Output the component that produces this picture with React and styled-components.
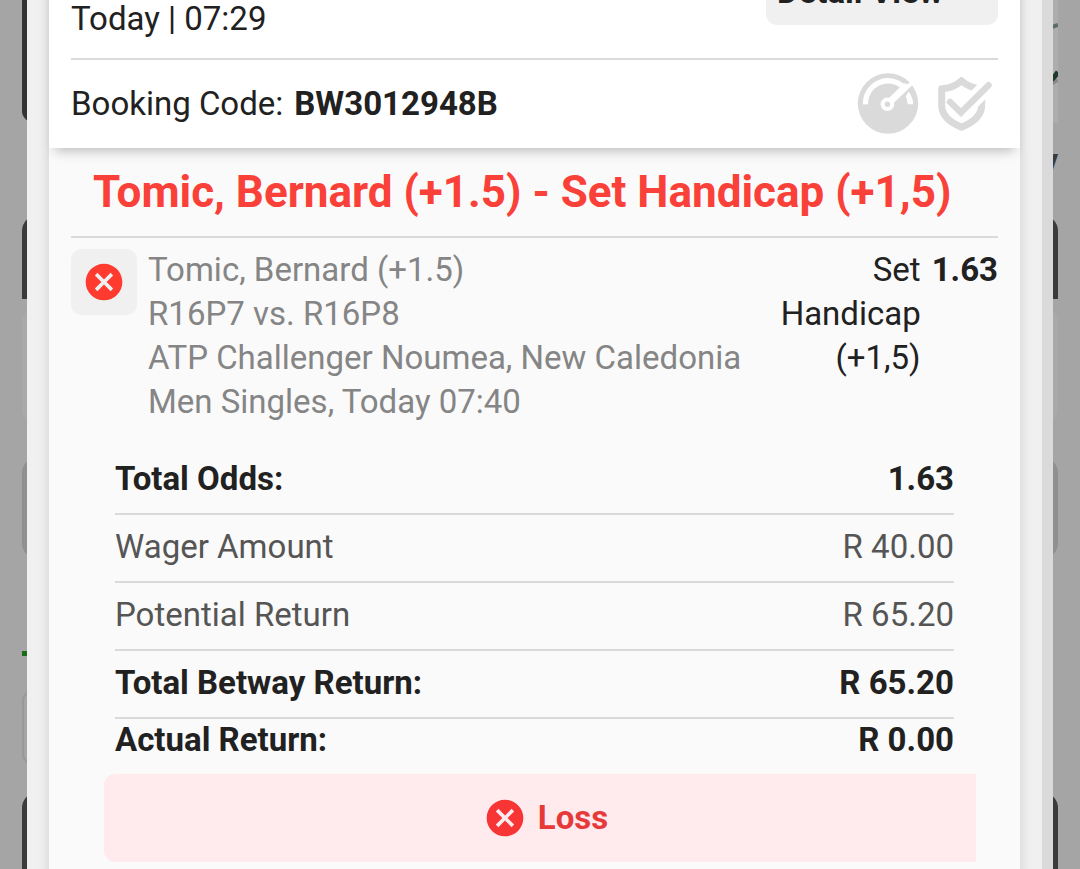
import React from 'react'
import styled, { createGlobalStyle } from 'styled-components'
import { MdCancel } from 'react-icons/md'

const GlobalStyle = createGlobalStyle`
  * {
    box-sizing: border-box;
  }

  body {
    margin: 0;
    background: #a5a5a5;
    color: #212121;
    font-family: Roboto, 'Liberation Sans', sans-serif;
    font-size: 33px;
    line-height: 44px;
  }
`

const Screen = styled.div`
  position: relative;
  min-height: 100vh;
  overflow: hidden;
`

// dimmed page that stays visible at both sides of the dialog
const Backdrop = styled.div`
  display: flex;
  flex-direction: column;
  height: 100vh;
  padding: 0 22px;
  overflow: hidden;
`

const TileRow = styled.div`
  display: flex;
  flex: none;
  height: 123px;
`

const Tile = styled.div`
  display: flex;
  flex: 1;
  justify-content: flex-end;
  height: ${props => props.$height}px;
  background: ${props => props.$color};
  border-radius: ${props => props.$radius};
`

const Caption = styled.div`
  flex: none;
  height: 92px;
  padding-top: 16px;
  color: #3b3b3b;
  font-weight: 700;
  text-align: right;
`

const Block = styled.div`
  flex: none;
  height: ${props => props.$height}px;
  margin-bottom: ${props => props.$gap}px;
  background: ${props => props.$color};
  border-radius: ${props => props.$radius || '0'};
`

const Marker = styled(Block)`
  width: 50%;
`

const Outline = styled(Block)`
  width: 50%;
  border: 2px solid #999999;
`

const Dialog = styled.main`
  position: absolute;
  top: 0;
  bottom: 0;
  left: 27px;
  right: 27px;
  padding: 0 22px;
  overflow: hidden;
  background: #f0f0f0;
  border-right: 11px solid #dadada;
`

const Slip = styled.article`
  min-height: 100%;
  padding-bottom: 22px;
  background: #fafafa;
  box-shadow: 0 0 11px rgba(0, 0, 0, 0.14);
`

const Header = styled.header`
  margin-top: -41px;
  padding: 0 22px;
  background: #ffffff;
  box-shadow: 0 9px 11px -6px rgba(0, 0, 0, 0.25);
`

const HeaderTop = styled.div`
  display: flex;
  justify-content: space-between;
  align-items: flex-start;
  padding-bottom: 17px;
  border-bottom: 2px solid #dadada;
`

const Placed = styled.div`
  padding-top: 38px;
`

const DetailButton = styled.button`
  width: 232px;
  height: 66px;
  padding: 0 11px;
  border: 0;
  border-radius: 11px;
  background: #f0f0f0;
  color: #212121;
  font: inherit;
  font-weight: 700;
  text-align: left;
`

const Booking = styled.div`
  display: flex;
  align-items: center;
  height: 88px;
`

const Code = styled.strong`
  flex: 1;
  margin-left: 11px;
`

const Badges = styled.div`
  display: flex;
  align-items: center;
  gap: 14px;
  padding-right: 3px;
`

const Title = styled.h1`
  margin: 0;
  padding: 16px 22px;
  color: #f94139;
  font-size: 44px;
  font-weight: 700;
  line-height: 56px;
  border-bottom: 2px solid #dadada;
`

const Body = styled.div`
  padding: 0 22px;
`

const Selection = styled.section`
  display: flex;
  align-items: flex-start;
  gap: 11px;
  padding: 10px 0 22px;
`

const Status = styled.div`
  display: flex;
  flex: none;
  align-items: center;
  justify-content: center;
  width: 66px;
  height: 66px;
  margin-top: 1px;
  border-radius: 11px;
  background: #f0f0f0;
  color: #ff3b30;
`

const Event = styled.div`
  flex: 1;
  color: #858585;
`

const Market = styled.div`
  width: 140px;
  text-align: right;
`

const Totals = styled.table`
  width: calc(100% - 88px);
  margin: 0 44px;
  border-collapse: collapse;
`

const TotalRow = styled.tr`
  color: ${props => (props.$strong ? '#212121' : '#555555')};

  th,
  td {
    height: ${props => (props.$last ? 44 : 68)}px;
    padding: 0 0 2px;
    font-weight: ${props => (props.$strong ? 700 : 400)};
    line-height: 42px;
    text-align: left;
    border-bottom: ${props => (props.$last ? '0' : '2px solid #dadada')};
  }

  td {
    text-align: right;
  }
`

const Result = styled.div`
  display: flex;
  align-items: center;
  justify-content: center;
  gap: 11px;
  height: 88px;
  margin: 11px 22px 0 33px;
  padding-left: 11px;
  border-radius: 11px 0 0 11px;
  background: #ffebee;
  color: #e63a3a;
  font-weight: 700;

  svg {
    color: #f83535;
  }
`

const totals = [
  { label: 'Total Odds:', value: '1.63', strong: true },
  { label: 'Wager Amount', value: 'R 40.00' },
  { label: 'Potential Return', value: 'R 65.20' },
  { label: 'Total Betway Return:', value: 'R 65.20', strong: true },
  { label: 'Actual Return:', value: 'R 0.00', strong: true, last: true },
]

const GaugeIcon = () => (
  <svg width='62' height='62' viewBox='0 0 62 62' fill='none' aria-hidden='true'>
    <circle cx='31' cy='30.5' r='30.2' fill='#dadada' />
    <path d='M8.500 31.300A22.500 22.500 0 0 1 46.500 14' stroke='#fff' strokeWidth='5.300' />
    <path d='M51.500 18.500L48.800 23.500Q50.400 27 50.700 31.300H56.200Q56 24 51.500 18.500Z' fill='#fff' />
    <path d='M27.800 29L51 6.500L56 11.500L33 33.500Z' fill='#fff' />
    <circle cx='30.400' cy='31.300' r='6.800' fill='#fff' />
    <circle cx='30.400' cy='31.300' r='2.700' fill='#dadada' />
    <path d='M49 6.500L52.800 9.200L50.500 11.200L46.800 10Z' fill='#dadada' />
  </svg>
)

const ShieldIcon = () => (
  <svg width='62' height='62' viewBox='0 0 62 62' fill='none' aria-hidden='true'>
    <path
      d='M28.500 7.800C23.500 12.500 16.500 15.500 8.700 15.800V32C8.700 42.500 17 49.500 28.500 54.200C40 49.500 48.700 42.500 48.700 32V15.800C40.500 15.500 33.500 12.500 28.500 7.800Z'
      stroke='#dadada'
      strokeWidth='7'
      strokeLinejoin='round'
    />
    <path d='M34 33.400L60 7.500' stroke='#fff' strokeWidth='16' />
    <path
      d='M17 29L28 39.500L55.500 12.200'
      stroke='#dadada'
      strokeWidth='6.500'
      strokeLinecap='round'
    />
  </svg>
)

const FramePreview = () => (
  <svg width='40' height='123' viewBox='0 0 40 123' fill='none' aria-hidden='true'>
    <path d='M0 27H34L40 25' stroke='#5d6f62' strokeWidth='4' />
    <path d='M0 80H34L40 72' stroke='#1f3a2b' strokeWidth='5' />
    <path d='M0 84H34L40 80' stroke='#888888' strokeWidth='3' />
  </svg>
)

class App extends React.Component {

  renderBackdrop() {
    return (
      <Backdrop aria-hidden='true'>
        <TileRow>
          <Tile $height={122} $color='#333333' $radius='0 0 11px 11px' />
          <Tile $height={123} $color='#adadad' $radius='0'>
            <FramePreview />
          </Tile>
        </TileRow>
        <Caption>y</Caption>
        <Block $height={84} $gap={11} $color='#3b3b3b' $radius='16px 16px 0 0' />
        <Block $height={111} $gap={36} $color='#a9a9a9' $radius='11px' />
        <Block $height={102} $gap={92} $color='#909090' $radius='16px' />
        <Marker $height={5} $gap={34} $color='#1b6b1b' />
        <Outline $height={75} $gap={27} $color='#a5a5a5' $radius='11px' />
        <Block $height={88} $gap={0} $color='#3b3b3b' $radius='16px 16px 0 0' />
      </Backdrop>
    )
  }

  renderHeader() {
    return (
      <Header>
        <HeaderTop>
          <Placed>Today | 07:29</Placed>
          <DetailButton type='button'>Detail View</DetailButton>
        </HeaderTop>
        <Booking>
          <span>Booking Code:</span>
          <Code>BW3012948B</Code>
          <Badges>
            <GaugeIcon />
            <ShieldIcon />
          </Badges>
        </Booking>
      </Header>
    )
  }

  render() {
    return (
      <Screen>
        <GlobalStyle />
        {this.renderBackdrop()}
        <Dialog>
          <Slip>
            {this.renderHeader()}
            <Body>
              <Title>Tomic, Bernard (+1.5) - Set Handicap (+1,5)</Title>
              <Selection>
                <Status>
                  <MdCancel size={44} />
                </Status>
                <Event>
                  <div>Tomic, Bernard (+1.5)</div>
                  <div>R16P7 vs. R16P8</div>
                  <div>ATP Challenger Noumea, New Caledonia Men Singles, Today 07:40</div>
                </Event>
                <Market>Set Handicap (+1,5)</Market>
                <strong>1.63</strong>
              </Selection>
              <Totals>
                <tbody>
                  {totals.map(row => (
                    <TotalRow key={row.label} $strong={row.strong} $last={row.last}>
                      <th scope='row'>{row.label}</th>
                      <td>{row.value}</td>
                    </TotalRow>
                  ))}
                </tbody>
              </Totals>
              <Result>
                <MdCancel size={44} />
                <span>Loss</span>
              </Result>
            </Body>
          </Slip>
        </Dialog>
      </Screen>
    )
  }
}

export default App
